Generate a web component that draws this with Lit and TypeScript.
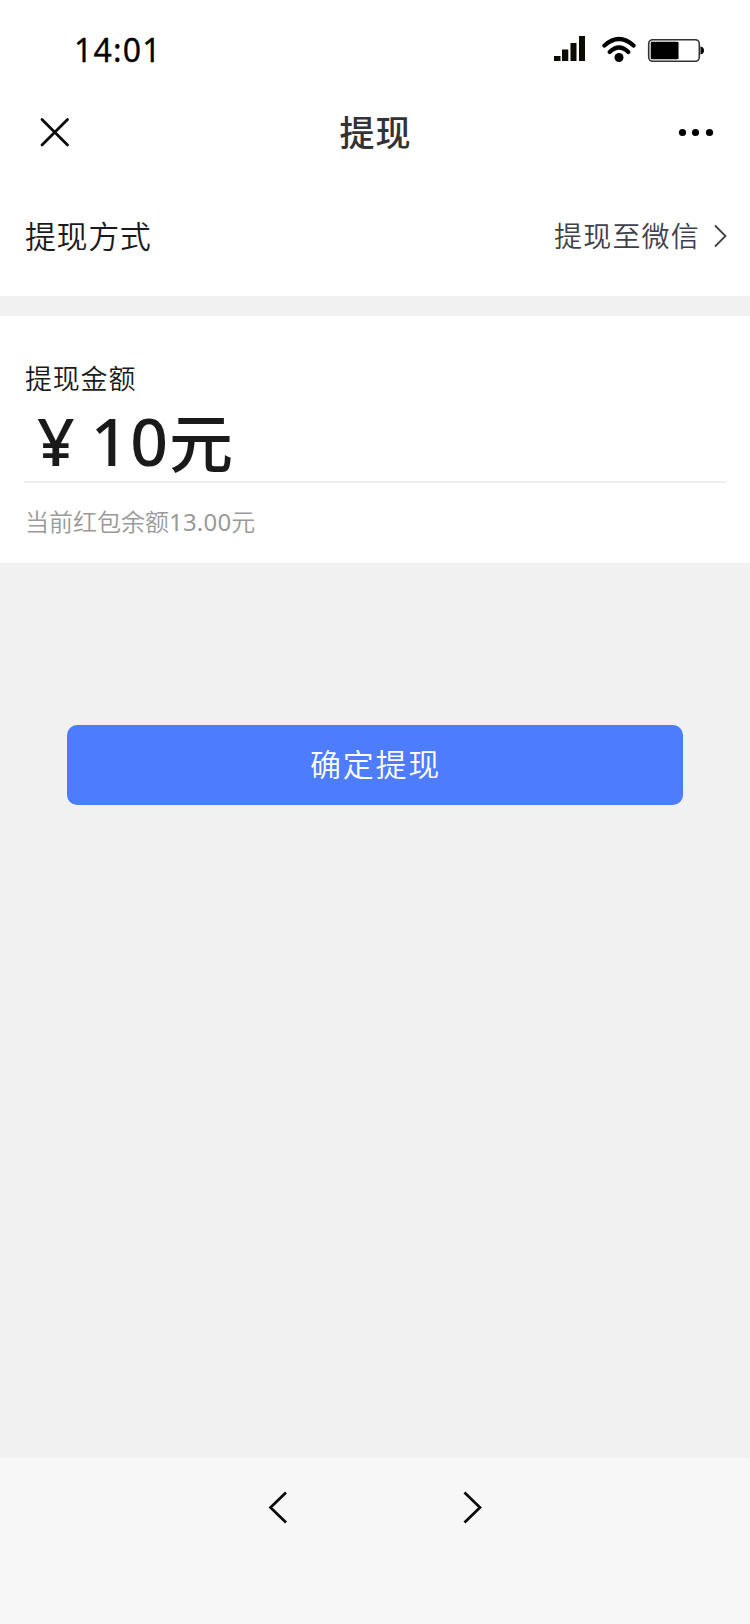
import { LitElement, html, css } from "lit";
import { customElement, property } from "lit/decorators.js";

@customElement("app-root")
export class AppRoot extends LitElement {
  @property() amount = "10";
  @property() balance = "13.00";

  static styles = css`
    :host {
      display: flex;
      flex-direction: column;
      box-sizing: border-box;
      width: 750px;
      height: 1624px;
      background: #f1f1f1;
      color: #1a1a1a;
      font-family: "Noto Sans", "Noto Sans CJK SC", sans-serif;
      font-weight: 350;
      overflow: hidden;
    }
    svg { display: block; flex: none; }
    .status {
      display: flex;
      align-items: center;
      height: 100px;
      background: #fff;
    }
    .time {
      flex: 1;
      padding-left: 74px;
      font-size: 32px;
      line-height: 40px;
      font-weight: 400;
      letter-spacing: 1.2px;
      color: #000;
      -webkit-text-stroke: 0.3px #000;
    }
    .nav {
      display: grid;
      grid-template-columns: 125px 1fr 125px;
      align-items: center;
      height: 66px;
      background: #fff;
    }
    .title {
      text-align: center;
      padding-left: 1px;
      font-size: 35px;
      line-height: 40px;
      font-weight: 500;
      letter-spacing: 1px;
      color: #333;
    }
    .method {
      display: flex;
      align-items: flex-start;
      justify-content: space-between;
      height: 130px;
      box-sizing: border-box;
      padding: 11px 22px 0 25px;
      background: #fff;
    }
    .label, .value {
      line-height: 40px;
      margin-top: 39px;
      font-size: 31px;
      letter-spacing: 0.6px;
    }
    .right { display: flex; align-items: flex-start; }
    .value { font-size: 28px; letter-spacing: 1.2px; color: #40404a; }
    .right svg { margin: 46px 0 0 12px; }
    .card {
      box-sizing: border-box;
      height: 247px;
      margin-top: 20px;
      padding: 42px 24px 0;
      background: #fff;
    }
    .caption { padding-left: 1px; font-size: 27px; line-height: 42px; height: 40px; letter-spacing: 0.8px; }
    .amount {
      display: flex;
      height: 83px;
      padding-left: 13px;
      border-bottom: 2px solid #eee;
      font-size: 66px;
      line-height: 85px;
      font-weight: 500;
    }
    .digits { margin-left: 16px; letter-spacing: 1.8px; }
    .unit { margin-left: -1px; font-size: 64px; line-height: 89px; }
    .balance { padding: 18px 0 0 1px; font-size: 24px; line-height: 41px; color: #999; }
    .sum { font-weight: 400; letter-spacing: 0.2px; }
    .action { flex: 1; padding: 162px 67px 0; }
    .confirm {
      display: block;
      box-sizing: border-box;
      width: 100%;
      height: 80px;
      padding: 0 0 5px 1px;
      border: 0;
      border-radius: 10px;
      background: #4d7cfe;
      color: #fff;
      font-family: inherit;
      font-weight: inherit;
      font-size: 31px;
      letter-spacing: 1.7px;
    }
    .footer {
      display: flex;
      justify-content: center;
      gap: 173px;
      box-sizing: border-box;
      height: 166px;
      padding: 32px 0 0 1px;
      background: #f7f7f7;
    }
  `;

  render() {
    return html`
      <div class="status">
        <div class="time">14:01</div>
        <svg width="196" height="40" viewBox="554 30 196 40">
          <path fill="#0b0b00" d="M554 56h6.500v5h-6.500zM562 49.500h6.300v11.500h-6.300zM570.500 43h6v18h-6zM579 36h6v25h-6z" />
          <g fill="none" stroke="#000" stroke-width="4.300" stroke-linecap="round">
            <path d="M604.500 45.500Q619 32.500 633.500 45.500" />
            <path d="M609.700 52Q619 43 628.300 52" />
          </g>
          <circle cx="619" cy="57.500" r="4.500" />
          <rect x="648.700" y="39.700" width="50.600" height="21.600" rx="4" fill="#fff" stroke="#333" stroke-width="1.600" />
          <rect x="650.200" y="41.200" width="28" height="18.600" rx="2" fill="#aaa" />
          <path d="M651 42h27.500v17H651z" />
          <path d="M700.500 46.500q3.500 .5 3.500 4t-3.500 4z" />
        </svg>
      </div>
      <div class="nav">
        <svg width="125" height="66" viewBox="0 100 125 66">
          <path d="M42 119.500L67.500 145M67.500 119.500L42 145" fill="none" stroke="#0b0b0d" stroke-width="2.800" stroke-linecap="round" />
        </svg>
        <div class="title">提现</div>
        <svg width="125" height="66" viewBox="625 100 125 66">
          <circle cx="682.500" cy="132.500" r="3.600" />
          <circle cx="695.500" cy="132.500" r="3.600" />
          <circle cx="709.500" cy="132.500" r="3.600" />
        </svg>
      </div>
      <div class="method">
        <div class="label">提现方式</div>
        <div class="right">
          <div class="value">提现至微信</div>
          <svg width="16" height="26" viewBox="712 223 16 26">
            <path d="M715 225.500L725.500 236L715 246.500" fill="none" stroke="#40404a" stroke-width="1.800" />
          </svg>
        </div>
      </div>
      <div class="card">
        <div class="caption">提现金额</div>
        <div class="amount">
          <span>¥</span><span class="digits">${this.amount}</span><span class="unit">元</span>
        </div>
        <div class="balance">当前红包余额<span class="sum">${this.balance}</span>元</div>
      </div>
      <div class="action"><button class="confirm">确定提现</button></div>
      <div class="footer">
        <svg width="22" height="36" viewBox="267 1490 22 36">
          <path d="M286 1492.500L270.500 1507.500L286 1522.500" fill="none" stroke="#0b0b0d" stroke-width="2.700" />
        </svg>
        <svg width="22" height="36" viewBox="463 1490 22 36">
          <path d="M465.500 1492.500L481 1507.500L465.500 1522.500" fill="none" stroke="#0b0b0d" stroke-width="2.700" />
        </svg>
      </div>
    `;
  }
}
